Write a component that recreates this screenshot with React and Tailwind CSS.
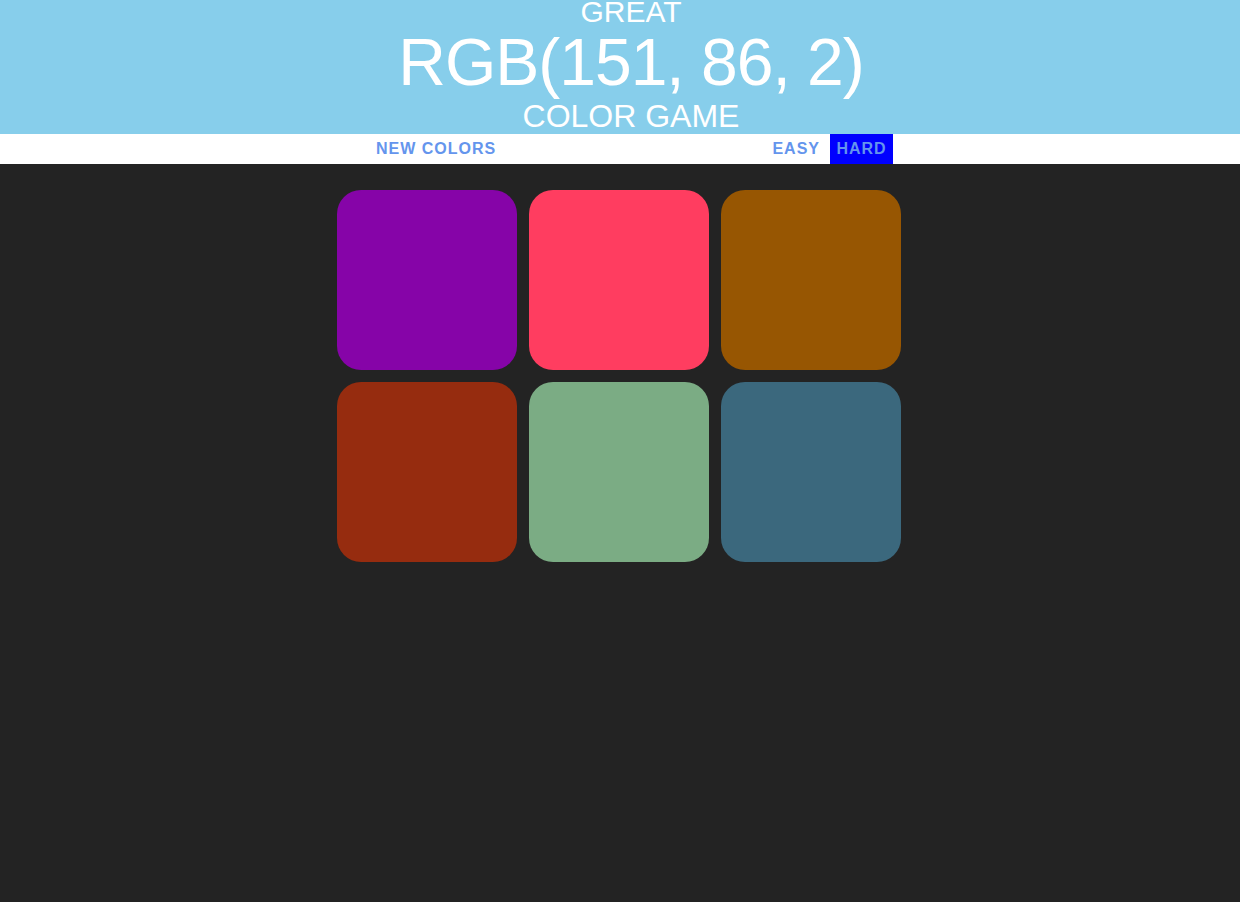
import React from 'react'

const colors = ['#8604a8', '#ff3d60', '#975602', '#962c0f', '#7bac84', '#3b687d']

const Square = ({ color }) => (
  <div className="w-[180px] h-[180px] rounded-[24px]" style={{ backgroundColor: color }} />
)

export default function App() {
  return (
    <div className="min-h-[902px] bg-[#232323] font-['Liberation_Sans',Arial,sans-serif]">
      <header className="h-[134px] pl-[22px] bg-[#87ceeb] text-white uppercase flex flex-col items-center overflow-hidden">
        <div className="text-[30px] leading-none mt-[-3px]">Great</div>
        <h1 className="text-[66px] leading-none tracking-[-1px] mt-[2px]">rgb(151, 86, 2)</h1>
        <div className="text-[32px] leading-none mt-[5px]">Color Game</div>
      </header>

      <nav className="h-[30px] bg-white flex items-stretch">
        <button className="ml-[370px] px-[6px] text-[16px] font-bold tracking-[1px] uppercase text-[#6495ed]">
          New Colors
        </button>
        <button className="ml-auto px-[6px] text-[16px] font-bold tracking-[1px] uppercase text-[#6495ed]">
          Easy
        </button>
        <button className="ml-[4px] mr-[347px] w-[63px] bg-[#0000ff] text-[16px] font-bold tracking-[1px] uppercase text-[#6495ed]">
          Hard
        </button>
      </nav>

      <main className="pt-[26px] flex justify-center pr-[2px]">
        <div className="grid grid-cols-3 gap-[12px]">
          {colors.map((c, i) => (
            <Square key={i} color={c} />
          ))}
        </div>
      </main>
    </div>
  )
}
